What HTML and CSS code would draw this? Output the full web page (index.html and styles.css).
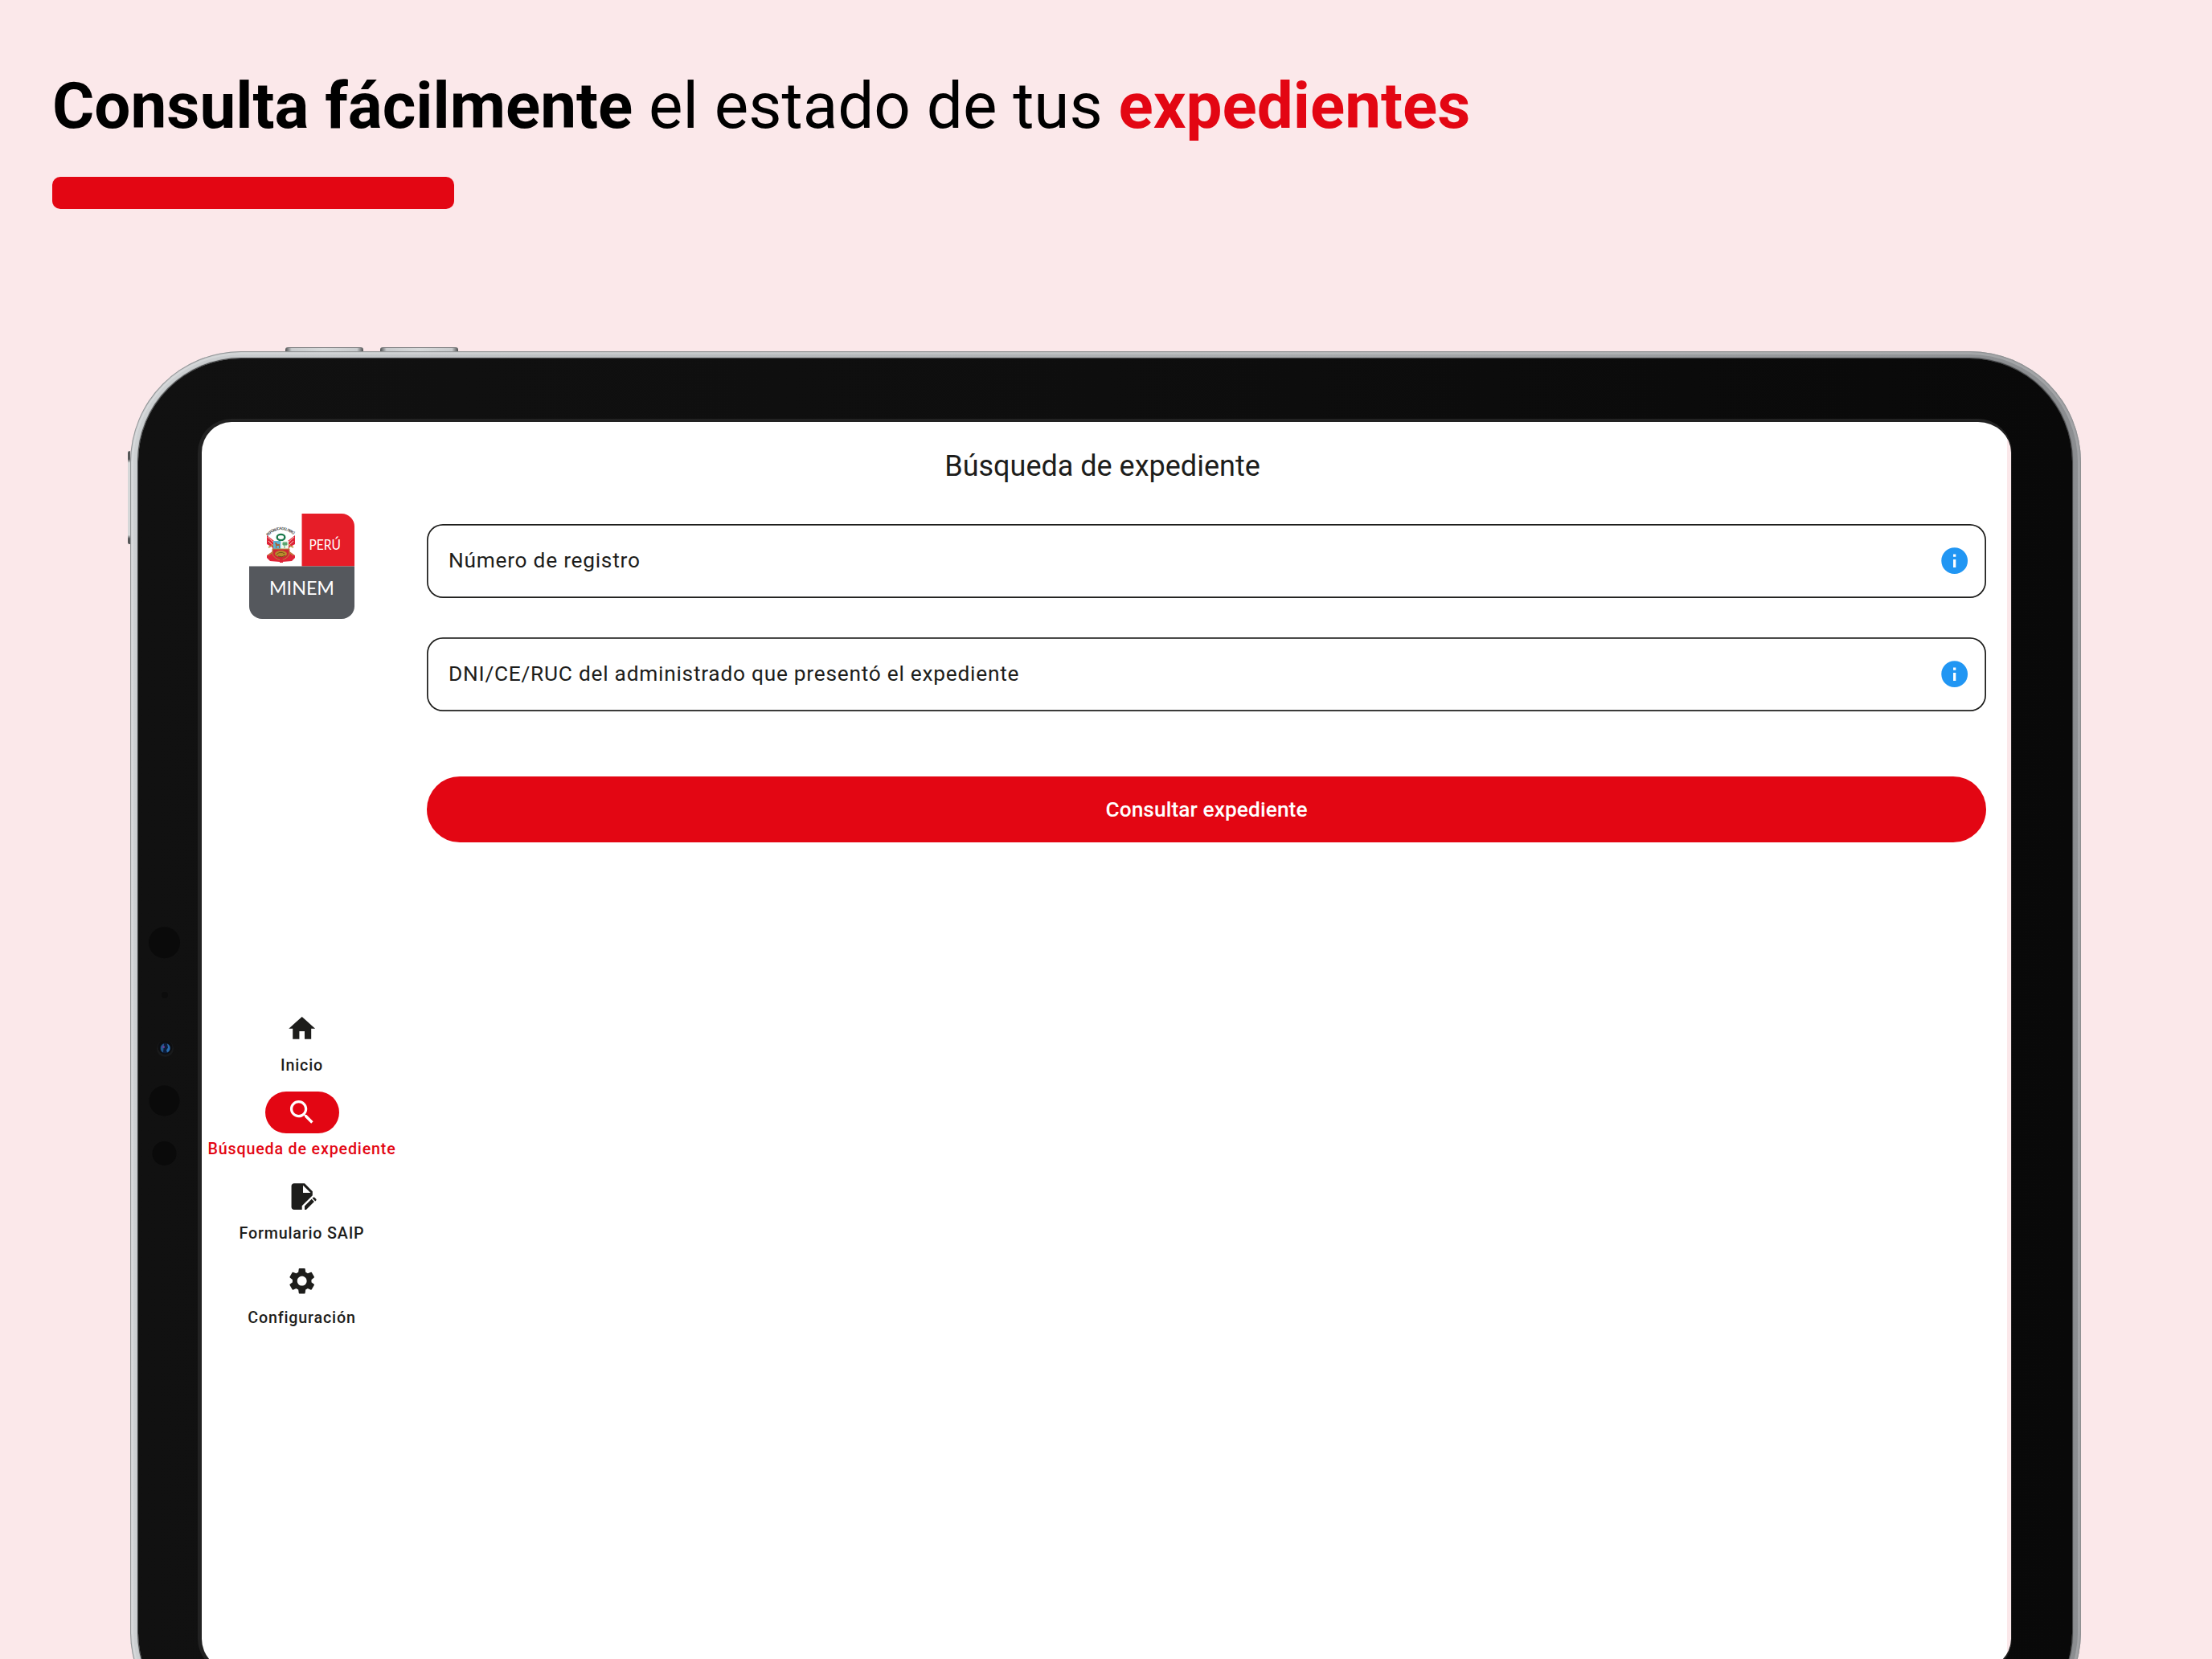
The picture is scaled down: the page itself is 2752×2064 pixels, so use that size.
FILE: index.html
```html
<!DOCTYPE html>
<html lang="es">

<head>
    <meta charset="UTF-8">
    <meta name="viewport" content="width=device-width, initial-scale=1.0">
    <title>MINEM - Búsqueda de expediente</title>
    <link rel="stylesheet" href="styles.css">
</head>

<body>

    <!-- Headline -->
    <header class="headline">
        <h1><strong>Consulta fácilmente</strong> el estado de tus <strong class="accent">expedientes</strong></h1>
        <div class="headline-bar"></div>
    </header>

    <!-- Tablet -->
    <div class="tablet">
        <span class="side-button volume-up"></span>
        <span class="side-button volume-down"></span>
        <span class="side-button power"></span>

        <div class="bezel">
            <svg class="sensors" width="40" height="300" viewBox="0 0 40 300">
                <circle cx="19.500" cy="22.700" r="19.500" fill="#0a0a0a" />
                <circle cx="20" cy="88" r="4" fill="#0c0c0c" />
                <circle cx="20.500" cy="154.500" r="10.500" fill="#191a1b" />
                <circle cx="20.500" cy="153" r="9" fill="#0d0e10" />
                <circle cx="20.500" cy="154" r="6.500" fill="#0d1c38" />
                <path d="M19 148.500a6 6 0 0 0-1 11z" fill="#23598e" />
                <path d="M23 148.500a6 6 0 0 1 0 11l-1-3 2-3z" fill="#2a6db0" />
                <circle cx="18.500" cy="152.500" r="1.500" fill="#6b3d9a" />
                <circle cx="19.500" cy="219.500" r="19" fill="#0a0a0a" />
                <circle cx="19.500" cy="285" r="15" fill="#0a0a0a" />
            </svg>

            <div class="screen">
                <h2 class="screen-title">Búsqueda de expediente</h2>

                <div class="layout">
                    <aside class="rail">
                        <svg class="logo" width="131" height="131" viewBox="0 0 131 131">
                            <path d="M65.500 0H115a16 16 0 0 1 16 16v49.500H65.500z" fill="#e61d28" />
                            <path d="M0 65.500h131V115a16 16 0 0 1-16 16H16a16 16 0 0 1-16-16z" fill="#55585d" />
                            <!-- Coat of arms -->
                            <path id="arms-arc" d="M23 28Q39.500 12 57 28" fill="none" />
                            <text class="arms-text"><textPath href="#arms-arc" textLength="36">REPÚBLICA DEL PERÚ</textPath></text>
                            <path d="M22 27l9 7v18l9 6-2 2-12-1-4-4zM57 27l-9 7v18l-9 6 2 2 12-1 4-4z" fill="#df2438" />
                            <path d="M22 38l7 4v5l-7 5zM57 38l-7 4v5l7 5z" fill="#fff" />
                            <path d="M23 29l11 10M24 34l9 9M56 29L45 39M55 34l-9 9" stroke="#f0c9b8" stroke-width="1" />
                            <path d="M24 42l6-3M24 52l6-5M55 42l-6-3M55 52l-6-5" stroke="#b88a3c" stroke-width="1.500" />
                            <ellipse cx="39.500" cy="29.500" rx="4.800" ry="3.600" fill="#fff" stroke="#1c7a4c" stroke-width="2.400" />
                            <path d="M30 34h9.500v10H30z" fill="#5eb3d4" />
                            <path d="M39.500 34H49v10h-9.500z" fill="#f0f6ec" />
                            <path d="M33 43v-4l-1-3h2l1 2h3v5h-1v-3h-3v3z" fill="#a4633a" />
                            <path d="M44 43v-4M42 36h5v3h-5z" fill="#5ba56f" stroke="#5ba56f" />
                            <path d="M29 44h21v6q-2 6-10.500 8Q31 56 29 50z" fill="#cf2634" stroke="#b88a3c" />
                            <ellipse cx="39.500" cy="50" rx="7.500" ry="4" fill="#b98a2e" />
                            <path d="M34 51q5-5 10-1M36 53q5 2 9-1" fill="none" stroke="#6d4a17" />
                            <path d="M38 57h4v4h-4z" fill="#df2438" />
                            <text class="logo-peru" x="74.500" y="45" textLength="39.500" lengthAdjust="spacingAndGlyphs">PERÚ</text>
                            <text class="logo-minem" x="25" y="101" textLength="81" lengthAdjust="spacingAndGlyphs">MINEM</text>
                        </svg>

                        <nav class="menu">
                            <a class="menu-item" href="#">
                                <span class="menu-icon">
                                    <svg viewBox="0 0 24 24"><path d="M10 20v-6h4v6h5v-8h3L12 3 2 12h3v8z" /></svg>
                                </span>
                                <span class="menu-label">Inicio</span>
                            </a>
                            <a class="menu-item active" href="#">
                                <span class="menu-icon">
                                    <svg viewBox="0 0 24 24"><path d="M15.500 14h-.79l-.28-.27C15.410 12.590 16 11.110 16 9.500 16 5.910 13.090 3 9.500 3S3 5.910 3 9.500 5.910 16 9.500 16c1.610 0 3.090-.59 4.230-1.570l.27.28v.79l5 4.990L20.490 19l-4.990-5zm-6 0C7.010 14 5 11.990 5 9.500S7.010 5 9.500 5 14 7.010 14 9.500 11.990 14 9.500 14z" /></svg>
                                </span>
                                <span class="menu-label">Búsqueda de expediente</span>
                            </a>
                            <a class="menu-item" href="#">
                                <span class="menu-icon">
                                    <svg viewBox="0 0 24 24"><path fill-rule="evenodd" d="M6 2h8l6 6v3.100l-8 7.900v3H6c-1.100 0-2-.9-2-2V4c0-1.100.9-2 2-2zm6.800 1.500v5.700h5.700z" /><path d="M14 22v-2.800l5.300-5.300 2 2L15.200 22zM19.900 13.300l.6-.6q.5-.4 1 0l1.200 1.200q.5.500 0 1l-.6.6z" /></svg>
                                </span>
                                <span class="menu-label">Formulario SAIP</span>
                            </a>
                            <a class="menu-item" href="#">
                                <span class="menu-icon">
                                    <svg viewBox="0 0 24 24"><path d="M19.140 12.940c.04-.3.06-.61.06-.94 0-.32-.02-.64-.07-.94l2.030-1.580c.18-.14.23-.41.12-.61l-1.920-3.320c-.12-.22-.37-.29-.59-.22l-2.390.96c-.5-.38-1.030-.7-1.620-.94l-.36-2.540c-.04-.24-.24-.41-.48-.41h-3.840c-.24 0-.43.17-.47.41l-.36 2.540c-.59.24-1.130.57-1.620.94l-2.390-.96c-.22-.08-.47 0-.59.22L2.740 8.870c-.12.21-.08.47.12.61l2.030 1.580c-.05.3-.09.63-.09.94s.02.64.07.94l-2.030 1.580c-.18.14-.23.41-.12.61l1.920 3.320c.12.22.37.29.59.22l2.390-.96c.5.38 1.030.7 1.620.94l.36 2.540c.05.24.24.41.48.41h3.840c.24 0 .44-.17.47-.41l.36-2.540c.59-.24 1.130-.56 1.620-.94l2.390.96c.22.08.47 0 .59-.22l1.920-3.320c.12-.22.07-.47-.12-.61l-2.010-1.580zM12 15.600c-1.980 0-3.600-1.620-3.600-3.600s1.620-3.600 3.600-3.600 3.600 1.620 3.600 3.600-1.620 3.600-3.600 3.600z" /></svg>
                                </span>
                                <span class="menu-label">Configuración</span>
                            </a>
                        </nav>
                    </aside>

                    <main class="search-form">
                        <div class="field">
                            <span>Número de registro</span>
                            <svg class="info" viewBox="0 0 24 24"><path d="M12 2C6.480 2 2 6.480 2 12s4.480 10 10 10 10-4.480 10-10S17.520 2 12 2zm1 15h-2v-6h2v6zm0-8h-2V7h2v2z" /></svg>
                        </div>
                        <div class="field">
                            <span>DNI/CE/RUC del administrado que presentó el expediente</span>
                            <svg class="info" viewBox="0 0 24 24"><path d="M12 2C6.480 2 2 6.480 2 12s4.480 10 10 10 10-4.480 10-10S17.520 2 12 2zm1 15h-2v-6h2v6zm0-8h-2V7h2v2z" /></svg>
                        </div>
                        <button class="submit" type="button">Consultar expediente</button>
                    </main>
                </div>
            </div>
        </div>
    </div>

</body>

</html>
```
FILE: styles.css
```css
* {
    box-sizing: border-box;
}

body,
html {
    margin: 0;
    padding: 0;
    height: 2064px;
    overflow: hidden;
    font-family: 'Roboto', sans-serif;
    background-color: #fbe8ea;
    color: #1d1d1b;
}

.headline {
    height: 437px;
    padding: 85px 65px 0;
}

.headline h1 {
    margin: 0 0 41px;
    font-size: 80px;
    font-weight: 400;
    line-height: 94px;
    color: black;
    white-space: nowrap;
}

.headline strong {
    font-weight: 700;
}

.headline .accent {
    color: #e30613;
}

.headline-bar {
    width: 500px;
    height: 40px;
    border-radius: 10px;
    background-color: #e30613;
}

/* Tablet frame */
.tablet {
    position: relative;
    width: 2427px;
    height: 1731px;
    margin-left: 162px;
    padding: 9px 11px 9px 10px;
    border-radius: 138px;
    background: linear-gradient(90deg, #cdd0d2 0, #bfc2c4 20%, #a9abad 60%, #8b8d90 100%);
    box-shadow: inset 0 0 1px 1px #8c8e90, inset 0 0 0 4px rgba(255, 255, 255, 0.2);
}

.bezel {
    position: relative;
    height: 100%;
    padding: 75px 75px 76px 74px;
    border-radius: 128px;
    background: linear-gradient(90deg, #111 0, #0e0e0e 50%, #090909 100%);
    box-shadow: 0 0 1px 1px #3a3b3c;
}

.side-button {
    position: absolute;
    background: linear-gradient(90deg, #4d4f50 0, #c9cbcd 8%, #d8dadb 50%, #c9cbcd 92%, #4d4f50 100%);
    border-top: 1px solid #77797b;
}

.volume-up,
.volume-down {
    top: -5px;
    width: 97px;
    height: 5px;
    border-radius: 3px 3px 0 0;
}

.volume-up {
    left: 193px;
}

.volume-down {
    left: 311px;
}

.power {
    top: 124px;
    left: -3px;
    width: 3px;
    height: 116px;
    border-radius: 2px 0 0 2px;
    background: linear-gradient(#555758 0, #555758 8%, #d5d7d8 12%, #d5d7d8 90%, #555758 94%);
}

.sensors {
    position: absolute;
    top: 704px;
    left: 13px;
}

/* App screen */
.screen {
    height: 1560px;
    border: solid #222;
    border-width: 4px 1px 4px 5px;
    border-radius: 42px;
    background: linear-gradient(90deg, white 0, white 2246px, #fbe8ea 2246px);
    overflow: hidden;
}

.screen-title {
    width: 2246px;
    margin: 0;
    padding: 33px 5px 0 0;
    font-size: 36px;
    font-weight: 400;
    line-height: 44px;
    text-align: center;
}

.layout {
    display: flex;
    width: 2246px;
}

.rail {
    display: flex;
    flex-direction: column;
    align-items: center;
    width: 249px;
    padding-top: 37px;
}

.logo {
    font-family: 'Lato', sans-serif;
}

.logo text {
    fill: white;
}

.logo .arms-text {
    font-size: 4.5px;
    font-weight: 700;
    fill: #333;
}

.logo-peru {
    font-size: 16.5px;
}

.logo-minem {
    font-size: 23px;
}

.menu {
    display: flex;
    flex-direction: column;
    gap: 19.4px;
    margin-top: 483.5px;
}

.menu-item {
    display: flex;
    flex-direction: column;
    align-items: center;
    gap: 7px;
    height: 85.3px;
    color: #1d1d1b;
    text-decoration: none;
}

.menu-icon {
    display: flex;
    align-items: center;
    justify-content: center;
    width: 92px;
    height: 52.6px;
    border-radius: 27px;
}

.menu-icon svg {
    width: 39.4px;
    height: 39.4px;
    fill: currentColor;
}

.menu-label {
    font-size: 19.7px;
    font-weight: 500;
    line-height: 26.3px;
    letter-spacing: 0.82px;
    white-space: nowrap;
}

.active {
    color: #e30613;
}

.active .menu-icon {
    background-color: #e30613;
    color: white;
}

.search-form {
    flex: 1;
    padding: 50px 26px 0 31px;
}

.field {
    display: flex;
    align-items: center;
    justify-content: space-between;
    height: 92px;
    margin-bottom: 49px;
    padding: 0 20px 2px 27px;
    border-radius: 20px;
    box-shadow: inset 0 0 0 1.7px #1d1d1b;
    font-size: 26.3px;
    letter-spacing: 0.74px;
}

.info {
    width: 39.4px;
    height: 39.4px;
    margin-top: 1px;
    fill: #2196f3;
}

.submit {
    display: block;
    width: 100%;
    height: 82px;
    margin-top: 81px;
    border: none;
    border-radius: 41px;
    background-color: #e30613;
    color: white;
    font-family: inherit;
    font-size: 26.3px;
    font-weight: 500;
    letter-spacing: 0.08px;
}
```
